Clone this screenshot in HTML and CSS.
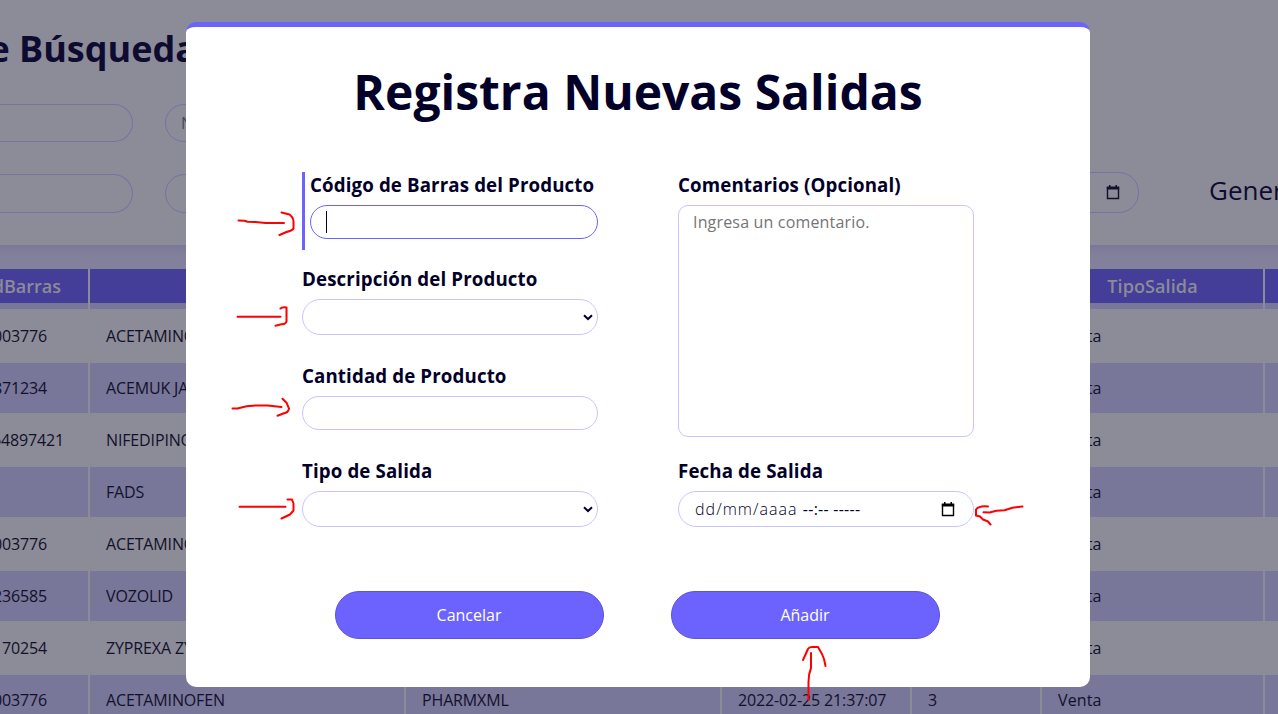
FILE: index.html
```html
<!DOCTYPE html>
<html lang="es">
<head>
<meta charset="utf-8">
<title>Registra Nuevas Salidas</title>
<link rel="stylesheet" href="styles.css">
</head>
<body>
<div class="page">
  <section class="search">
    <h2 class="search-title"><span>Criterios de Búsqueda</span></h2>
    <div class="search-row first">
      <div class="pill left"></div>
      <div class="pill mid">Nombre</div>
    </div>
    <div class="search-row second">
      <div class="pill left"></div>
      <div class="pill wide"></div>
      <div class="pill date"><svg class="cal" viewBox="0 0 14 15"><path d="M1.5 3h11v10.5h-11z" fill="none" stroke="currentColor" stroke-width="1.4"/><path d="M.8 1.5h12.4V4.5H.8zM3 0h1.5v2H3zM9.5 0H11v2H9.5z" fill="currentColor"/></svg></div>
      <div class="generate">Generar</div>
    </div>
  </section>
  <div class="band"></div>
  <div class="table">
    <div class="row head"><div class="right">CodBarras</div><div></div><div></div><div></div><div></div><div>TipoSalida</div><div></div></div>
    <div class="row"><div>003776</div><div>ACETAMINOFEN</div><div></div><div></div><div></div><div>Venta</div><div></div></div>
    <div class="row alt"><div>871234</div><div>ACEMUK JARABE</div><div></div><div></div><div></div><div>Venta</div><div></div></div>
    <div class="row"><div class="long">64897421</div><div>NIFEDIPINO</div><div></div><div></div><div></div><div>Venta</div><div></div></div>
    <div class="row alt"><div></div><div>FADS</div><div></div><div></div><div></div><div>Venta</div><div></div></div>
    <div class="row"><div>003776</div><div>ACETAMINOFEN</div><div></div><div></div><div></div><div>Venta</div><div></div></div>
    <div class="row alt"><div>236585</div><div>VOZOLID</div><div></div><div></div><div></div><div>Venta</div><div></div></div>
    <div class="row"><div>170254</div><div>ZYPREXA ZYDIS</div><div></div><div></div><div></div><div>Venta</div><div></div></div>
    <div class="row alt"><div>003776</div><div>ACETAMINOFEN</div><div>PHARMXML</div><div>2022-02-25 21:37:07</div><div>3</div><div>Venta</div><div></div></div>
  </div>
</div>

<div class="overlay">
  <div class="modal">
    <h1 class="title">Registra Nuevas Salidas</h1>
    <div class="form">
      <div class="field active"><label>Código de Barras del Producto</label><div class="control"><i class="caret"></i></div></div>
      <div class="field comments"><label>Comentarios (Opcional)</label><div class="control area">Ingresa un comentario.</div></div>
      <div class="field"><label>Descripción del Producto</label><div class="control tall"><svg class="chev" viewBox="0 0 10 7"><path d="M1 1.2l4 3.8 4-3.8" fill="none" stroke="currentColor" stroke-width="2"/></svg></div></div>
      <div class="field"><label>Cantidad de Producto</label><div class="control"></div></div>
      <div class="field"><label>Tipo de Salida</label><div class="control tall"><svg class="chev" viewBox="0 0 10 7"><path d="M1 1.2l4 3.8 4-3.8" fill="none" stroke="currentColor" stroke-width="2"/></svg></div></div>
      <div class="field"><label>Fecha de Salida</label><div class="control tall datetime"><span>dd/mm/aaaa <span class="time">--:-- -----</span></span><svg class="cal" viewBox="0 0 14 15"><path d="M1.5 3h11v10.5h-11z" fill="none" stroke="currentColor" stroke-width="1.4"/><path d="M.8 1.5h12.4V4.5H.8zM3 0h1.5v2H3zM9.5 0H11v2H9.5z" fill="currentColor"/></svg></div></div>
    </div>
    <div class="actions"><button class="btn">Cancelar</button><button class="btn">Añadir</button></div>
  </div>
</div>

<svg class="marks" viewBox="0 0 1278 714">
  <path d="M238.500 220.500l6 .2 3 1 8 .3 10 1h18.500M281.500 212.500l8 2q4 3 4 7v7q-1 2-7 3.500l-7 3"/>
  <path d="M237.500 316.700h43M280.500 308.500q2-2 6-1v14q-1 3-5 2.700l-6 1.500"/>
  <path d="M232.500 408.500h5q10-3 20-3h10l14 1.500M282.500 398.700l4 4 2.500 6q-1 4-5 4.500l-6.500 2.500"/>
  <path d="M239.500 506.700h46M287.500 499.500h4.500l1.500 4v7l-3.500 4-8.500 4"/>
  <path d="M1022.500 506.500l-10 1.200-8 2.500-8 .5-7 1.800-6-.2M988 506.500q-9-1-12 3v6l4 1 3 3 5 2 2.500 3"/>
  <path d="M808.500 700v-18q0-8 2.500-14v-15M803 660l5-11q1-2 4-2h6l4 7 2 5 1.500 7"/>
</svg>
</body>
</html>
```
FILE: styles.css
```css
* { box-sizing: border-box; }
body { margin: 0; width: 1278px; height: 714px; overflow: hidden; font-family: "Open Sans", "Noto Sans", sans-serif; background: #8c8b98; }
.page { height: 714px; overflow: hidden; color: #12112a; }

.search { height: 245px; display: flex; flex-direction: column; }
.search-title { margin: 0; height: 104px; padding-top: 24px; width: 197px; display: flex; justify-content: flex-end; white-space: nowrap; font-size: 36px; line-height: 50px; font-weight: 700; color: #0e0b31; }
.search-row { display: flex; }
.search-row > * { flex: none; }
.first { height: 68px; }
.second { height: 41px; }
.pill { border: 1px solid #7672a4; border-radius: 20px; height: 38px; }
.pill.left { width: 133px; border-left: 0; border-radius: 0 20px 20px 0; margin-right: 32px; }
.pill.mid { width: 300px; padding-left: 15px; font-size: 16px; line-height: 36px; color: #3f4a5c; }
.second .pill { height: 39px; margin-top: 2px; }
.pill.wide { width: 300px; }
.second .pill.date { width: 300px; height: 41px; margin: 0 0 0 374px; display: flex; align-items: center; justify-content: flex-end; padding-right: 18px; }
.generate { margin-left: 70px; font-size: 26px; line-height: 36px; letter-spacing: 0; white-space: nowrap; color: #0e0b31; }
.cal { width: 14px; height: 15px; flex: none; }

.band { height: 24px; background: linear-gradient(#7a789a, #817f9a 40%, #83819a); }

.table { display: flex; flex-direction: column; width: 1353px; }
.row { display: grid; grid-template-columns: 88px 314px 314px 188px 128px 221px 88px; column-gap: 2px; height: 54px; font-size: 16px; line-height: 54px; letter-spacing: -.14px; white-space: nowrap; }
.row > div { padding-left: 16px; overflow: hidden; }
.row > div:first-child { padding: 0 41px 0 0; display: flex; justify-content: flex-end; }
.row > div.long:first-child { padding-right: 24px; }
.row > div:nth-child(6) { letter-spacing: .1px; }
.alt { height: 50px; line-height: 50px; }
.alt > div { background: #787699; }
.head { height: 40px; line-height: 34px; font-size: 18px; letter-spacing: 0; font-weight: 600; color: #8c8b98; }
.head > div { background: #443e99; border-bottom: 6px solid #787699; padding: 0; text-align: center; }
.head > div.right:first-child { padding-right: 27px; }

.overlay { position: absolute; inset: 0; display: flex; align-items: flex-start; padding: 22px 0 0 186px; }
.modal { width: 904px; height: 665px; background: #fff; border-top: 5px solid #6c63ff; border-radius: 10px; padding: 0 116px; color: #020029; }
.title { margin: 0; height: 145px; padding-top: 32px; line-height: 66px; font-size: 48px; font-weight: 700; text-align: center; white-space: nowrap; }
.form { display: grid; grid-template-columns: 296px 296px; column-gap: 80px; grid-template-rows: 94px 97px 95px 69px; }
.field { display: flex; flex-direction: column; gap: 7px; }
.field label { font-size: 18.72px; line-height: 26px; height: 26px; font-weight: 700; letter-spacing: .12px; white-space: nowrap; }
.active { height: 78px; border-left: 3px solid #6c63ff; padding-left: 5px; }
.comments { grid-column: 2; grid-row: 1 / 4; }
.control { height: 34px; border: 1px solid #c8c4ff; border-radius: 18px; display: flex; align-items: center; justify-content: flex-end; padding: 0 15px; }
.active .control { border-color: #6c63ff; justify-content: flex-start; }
.tall { height: 36px; }
.caret { width: 1px; height: 22px; background: #020029; }
.chev { width: 10px; height: 7px; margin-right: -11px; }
.control.area { height: 232px; border-radius: 10px; align-items: flex-start; justify-content: flex-start; padding: 5px 14px; font-size: 16px; line-height: 22px; letter-spacing: .17px; color: #757575; }
.datetime { justify-content: space-between; padding: 0 18px 0 16px; font-size: 16px; font-weight: 300; letter-spacing: 1.05px; color: #020029; white-space: nowrap; }
.time { letter-spacing: .25px; font-weight: 400; }
.datetime .cal { color: #000; }
.actions { display: flex; justify-content: center; gap: 67px; padding-top: 64px; margin-right: 2px; }
.btn { width: 269px; height: 48px; border: 1px solid #5b53d8; border-radius: 24px; background: #6c63ff; color: #fff; font: 500 16px "Open Sans", sans-serif; padding: 0; }

.marks { position: absolute; left: 0; top: 0; width: 1278px; height: 714px; fill: none; stroke: #f00; stroke-width: 2; stroke-linecap: round; stroke-linejoin: round; }
```
